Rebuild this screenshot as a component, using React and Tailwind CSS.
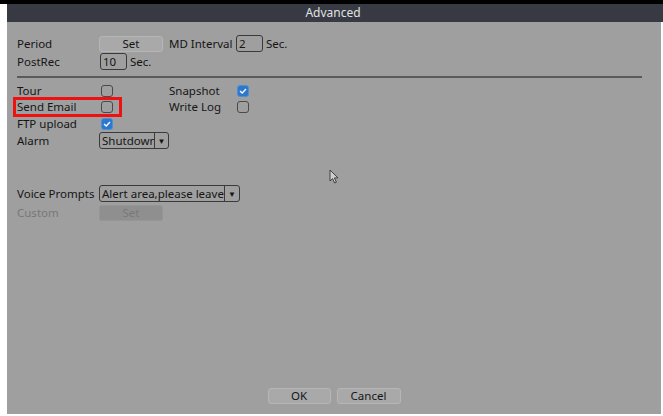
import React from "react";

const Check = ({ on }) =>
  on ? (
    <span className="flex h-[12px] w-[12px] items-center justify-center rounded-[3px] border border-[#4d8fd6] bg-[#2b78cc]">
      <svg width="8" height="6" viewBox="0 0 8 6">
        <path d="M1 3 L3.2 5 L7 1" fill="none" stroke="#fff" strokeWidth="1.3" />
      </svg>
    </span>
  ) : (
    <span className="block h-[12px] w-[12px] rounded-[3px] border border-[#4a4a4a]" />
  );

const Field = ({ value, w }) => (
  <span
    className={`flex h-[17px] items-center rounded-[3px] border border-[#3a3a3a] pl-[2px] leading-none ${w}`}
  >
    {value}
  </span>
);

const Select = ({ value, w, tw, clip }) => (
  <span
    className={`flex h-[17px] items-center rounded-[3px] border border-[#3a3a3a] leading-none ${w}`}
  >
    <span className={`min-w-0 flex-1 whitespace-nowrap pl-[2px] ${clip ? "overflow-hidden" : ""}`}>
      {value}
    </span>
    <span className={`flex h-full shrink-0 items-center justify-center border-l border-[#3a3a3a] text-[8px] ${tw}`}>
      ▼
    </span>
  </span>
);

const Btn = ({ children, w = "w-[64px]", disabled }) => (
  <span
    className={`flex h-[16px] items-center justify-center rounded-[3px] border leading-none ${w} ${
      disabled
        ? "border-[#959595] bg-[#8f8f8f] text-[#7a7a7a]"
        : "border-[#b6b6b6] bg-[#a9a9a9] text-[#151515]"
    }`}
  >
    {children}
  </span>
);

export default function App() {
  return (
    <div
      className="relative h-[416px] w-[663px] overflow-hidden bg-white text-[11.5px] text-[#151515]"
      style={{ fontFamily: '"Noto Sans", "Open Sans", sans-serif' }}
    >
      <div className="h-[4px] bg-black" />
      <div className="ml-[7px] w-[656px]">
        <div className="flex h-[18px] items-center justify-center bg-[#373a43] pr-[4px] text-[12px] text-[#e2e2e2]">
          Advanced
        </div>
        <div className="mr-[2px] flex h-[392px] flex-col bg-[#9f9f9f] pl-[10px]">
          {/* record settings */}
          <div className="mt-[13px] flex h-[17px] items-center">
            <span className="w-[82px]">Period</span>
            <Btn>Set</Btn>
            <span className="ml-[6px] w-[67px]">MD Interval</span>
            <Field value="2" w="w-[27px]" />
            <span className="ml-[3px]">Sec.</span>
          </div>
          <div className="mt-[1px] flex h-[17px] items-center">
            <span className="w-[83px]">PostRec</span>
            <Field value="10" w="w-[27px]" />
            <span className="ml-[3px]">Sec.</span>
          </div>

          <div className="mr-[19px] mt-[6px] h-[2px] bg-[#5a5a5a]" />

          {/* linkage options */}
          <div className="mt-[5px] flex h-[16px] items-center">
            <span className="w-[84px]">Tour</span>
            <Check />
            <span className="ml-[56px] w-[68px]">Snapshot</span>
            <Check on />
          </div>
          <div className="flex h-[16px] items-center">
            <span className="w-[84px]">Send Email</span>
            <Check />
            <span className="ml-[56px] w-[68px]">Write Log</span>
            <Check />
          </div>
          <div className="mt-[1px] flex h-[16px] items-center">
            <span className="w-[84px]">FTP upload</span>
            <Check on />
          </div>
          <div className="flex h-[17px] items-center">
            <span className="w-[82px]">Alarm</span>
            <Select value="Shutdown" w="w-[70px]" tw="w-[14px]" clip />
          </div>

          <div className="mt-[36px] flex h-[17px] items-center">
            <span className="w-[82px]">Voice Prompts</span>
            <Select value="Alert area,please leave" w="w-[141px]" tw="w-[15px]" />
          </div>
          <div className="mt-[2px] flex h-[17px] items-center">
            <span className="w-[82px] text-[#777]">Custom</span>
            <Btn disabled>Set</Btn>
          </div>

          <div className="mb-[10px] mt-auto flex justify-center gap-[6px] pr-[10px]">
            <Btn w="w-[63px]">OK</Btn>
            <Btn>Cancel</Btn>
          </div>
        </div>
      </div>

      {/* highlight box */}
      <div className="absolute left-[13px] top-[97px] h-[20px] w-[109px] border-[3px] border-[#ee1111]" />

      {/* mouse cursor */}
      <svg className="absolute left-[329px] top-[169px]" width="12" height="16" viewBox="0 0 12 16">
        <path
          d="M1 1 L1 12 L3.6 9.6 L5.6 14 L7.4 13.2 L5.4 8.9 L9 8.9 Z"
          fill="#cfcfcf"
          stroke="#333"
          strokeWidth="0.9"
        />
      </svg>
    </div>
  );
}
